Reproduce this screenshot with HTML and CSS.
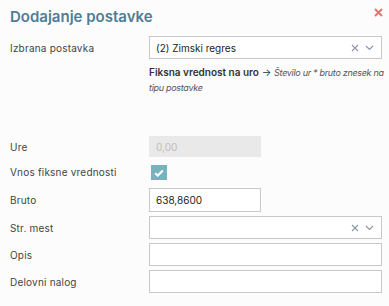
FILE: index.html
```html
<!DOCTYPE html>
<html lang="sl">
<head>
    <meta charset="UTF-8">
    <meta name="viewport" content="width=device-width, initial-scale=1.0">
    <title>Dodajanje postavke</title>
    <link rel="stylesheet" href="styles.css">
</head>
<body>
    <div class="dialog">
        <div class="dialog-header">
            <h1>Dodajanje postavke</h1>
            <svg class="close" width="9" height="9" viewBox="0 0 9 9"><path d="M1 1l7 7M8 1L1 8" stroke="#ec7070" stroke-width="2"/></svg>
        </div>
        <form>
            <div class="row">
                <label>Izbrana postavka</label>
                <div class="select wide">
                    <span class="value">(2) Zimski regres</span>
                    <svg class="clear" width="8" height="8" viewBox="0 0 8 8"><path d="M1 1l6 6M7 1L1 7" stroke="#8a97a6" stroke-width="1.1"/></svg>
                    <svg class="chevron" width="9" height="6" viewBox="0 0 9 6"><path d="M1 1l3.5 3.5L8 1" fill="none" stroke="#8a97a6" stroke-width="1.1"/></svg>
                </div>
            </div>
            <p class="hint"><strong>Fiksna vrednost na uro</strong> &rarr; <em>Število ur * bruto znesek na tipu postavke</em></p>

            <div class="row row-ure">
                <label>Ure</label>
                <input type="text" class="input short" placeholder="0,00" disabled>
            </div>
            <div class="row row-check">
                <label>Vnos fiksne vrednosti</label>
                <span class="checkbox">
                    <svg width="10" height="8" viewBox="0 0 10 8"><path d="M1.2 4.2l2.6 2.3L8.8 1.4" fill="none" stroke="#fff" stroke-width="2.2"/></svg>
                </span>
            </div>
            <div class="row row-bruto">
                <label>Bruto</label>
                <input type="text" class="input short" value="638,8600">
            </div>
            <div class="row">
                <label>Str. mest</label>
                <div class="select wide">
                    <span class="value"></span>
                    <svg class="clear" width="8" height="8" viewBox="0 0 8 8"><path d="M1 1l6 6M7 1L1 7" stroke="#8a97a6" stroke-width="1.1"/></svg>
                    <svg class="chevron" width="9" height="6" viewBox="0 0 9 6"><path d="M1 1l3.5 3.5L8 1" fill="none" stroke="#8a97a6" stroke-width="1.1"/></svg>
                </div>
            </div>
            <div class="row">
                <label>Opis</label>
                <input type="text" class="input wide">
            </div>
            <div class="row">
                <label>Delovni nalog</label>
                <input type="text" class="input wide">
            </div>
        </form>
    </div>
</body>
</html>
```

FILE: styles.css
```css
body {
    margin: 0;
    font-family: Inter, "Noto Sans", sans-serif;
    background-color: #fcfcfc;
    color: #333;
}
.dialog {
    padding: 7px 7px 0 10px;
}
.dialog-header {
    display: flex;
    justify-content: space-between;
    align-items: flex-start;
    height: 29px;
}
.dialog-header h1 {
    margin: 0;
    font-size: 15px;
    line-height: 20px;
    font-weight: 600;
    color: #4d7d98;
}
.close {
    margin-top: 1px;
    margin-right: -1px;
}
.row {
    display: flex;
    align-items: center;
    margin-bottom: 4px;
}
.row label {
    width: 139px;
    flex-shrink: 0;
    font-size: 10px;
    letter-spacing: 0.2px;
    color: #444;
}
.input, .select {
    box-sizing: border-box;
    height: 23px;
    border: 1px solid #c8c8c8;
    background: #fff;
    font-family: inherit;
    font-size: 10px;
    color: #222;
    padding: 0 6px;
    margin: 0;
    border-radius: 0;
}
.wide {
    width: 233px;
}
.short {
    width: 112px;
}
.select {
    display: flex;
    align-items: center;
}
.select .value {
    flex: 1;
}
.select .clear {
    margin-right: 6px;
}
.select .chevron {
    margin-right: 1px;
}
.hint {
    height: 28px;
    margin: 6px -5px 0 139px;
    font-size: 10px;
    line-height: 14px;
    color: #333;
}
.hint strong {
    font-weight: 600;
}
.hint em {
    font-size: 9px;
    letter-spacing: -0.3px;
    color: #555;
}
.row-ure {
    margin-top: 43px;
    margin-bottom: 8px;
}
.input:disabled {
    background: #e9e9e9;
    border-color: #e9e9e9;
    height: 21px;
}
.input:disabled::placeholder {
    color: #bdbdbd;
}
.checkbox {
    width: 16px;
    height: 15px;
    margin-left: 2px;
    background: #78b2bf;
    display: flex;
    align-items: center;
    justify-content: center;
}
.row-check {
    margin-bottom: 8px;
}
.row-check label {
    position: relative;
    top: -1px;
}
.row-bruto .input {
    height: 24px;
}
```
